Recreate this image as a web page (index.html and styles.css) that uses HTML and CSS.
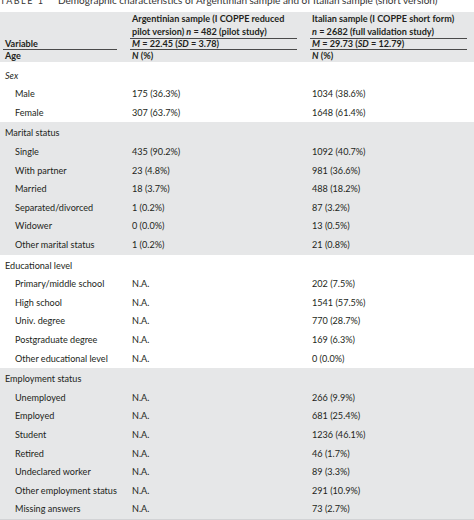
FILE: index.html
```html
<!DOCTYPE html>
<html lang="en">
<head>
    <meta charset="UTF-8">
    <title>Table 1</title>
    <link rel="stylesheet" href="styles.css">
</head>
<body>
    <div class="caption"><span class="label">TABLE 1</span>Demographic characteristics of Argentinian sample and of Italian sample (short version)</div>

    <div class="thead">
        <div class="row head-1">
            <div class="cell"></div>
            <div class="cell ruled">Argentinian sample (I COPPE reduced<br>pilot version) <i>n</i> = 482 (pilot study)</div>
            <div class="cell ruled">Italian sample (I COPPE short form)<br><i>n</i> = 2682 (full validation study)</div>
        </div>
        <div class="row head-2">
            <div class="cell ruled">Variable</div>
            <div class="cell ruled"><i>M</i> = 22.45 (<i>SD</i> = 3.78)</div>
            <div class="cell ruled"><i>M</i> = 29.73 (<i>SD</i> = 12.79)</div>
        </div>
        <div class="row head-3">
            <div class="cell">Age</div>
            <div class="cell"><i>N</i> (%)</div>
            <div class="cell"><i>N</i> (%)</div>
        </div>
    </div>

    <div class="section first">
        <div class="row"><div class="cell group"><i>Sex</i></div><div class="cell"></div><div class="cell"></div></div>
        <div class="row"><div class="cell sub">Male</div><div class="cell">175 (36.3%)</div><div class="cell">1034 (38.6%)</div></div>
        <div class="row"><div class="cell sub">Female</div><div class="cell">307 (63.7%)</div><div class="cell">1648 (61.4%)</div></div>
    </div>

    <div class="section shaded">
        <div class="row"><div class="cell group">Marital status</div><div class="cell"></div><div class="cell"></div></div>
        <div class="row"><div class="cell sub">Single</div><div class="cell">435 (90.2%)</div><div class="cell">1092 (40.7%)</div></div>
        <div class="row"><div class="cell sub">With partner</div><div class="cell">23 (4.8%)</div><div class="cell">981 (36.6%)</div></div>
        <div class="row"><div class="cell sub">Married</div><div class="cell">18 (3.7%)</div><div class="cell">488 (18.2%)</div></div>
        <div class="row"><div class="cell sub">Separated/divorced</div><div class="cell">1 (0.2%)</div><div class="cell">87 (3.2%)</div></div>
        <div class="row"><div class="cell sub">Widower</div><div class="cell">0 (0.0%)</div><div class="cell">13 (0.5%)</div></div>
        <div class="row"><div class="cell sub">Other marital status</div><div class="cell">1 (0.2%)</div><div class="cell">21 (0.8%)</div></div>
    </div>

    <div class="section">
        <div class="row"><div class="cell group">Educational level</div><div class="cell"></div><div class="cell"></div></div>
        <div class="row"><div class="cell sub">Primary/middle school</div><div class="cell">N.A.</div><div class="cell">202 (7.5%)</div></div>
        <div class="row"><div class="cell sub">High school</div><div class="cell">N.A.</div><div class="cell">1541 (57.5%)</div></div>
        <div class="row"><div class="cell sub">Univ. degree</div><div class="cell">N.A.</div><div class="cell">770 (28.7%)</div></div>
        <div class="row"><div class="cell sub">Postgraduate degree</div><div class="cell">N.A.</div><div class="cell">169 (6.3%)</div></div>
        <div class="row"><div class="cell sub">Other educational level</div><div class="cell">N.A.</div><div class="cell">0 (0.0%)</div></div>
    </div>

    <div class="section shaded last">
        <div class="row"><div class="cell group">Employment status</div><div class="cell"></div><div class="cell"></div></div>
        <div class="row"><div class="cell sub">Unemployed</div><div class="cell">N.A.</div><div class="cell">266 (9.9%)</div></div>
        <div class="row"><div class="cell sub">Employed</div><div class="cell">N.A.</div><div class="cell">681 (25.4%)</div></div>
        <div class="row"><div class="cell sub">Student</div><div class="cell">N.A.</div><div class="cell">1236 (46.1%)</div></div>
        <div class="row"><div class="cell sub">Retired</div><div class="cell">N.A.</div><div class="cell">46 (1.7%)</div></div>
        <div class="row"><div class="cell sub">Undeclared worker</div><div class="cell">N.A.</div><div class="cell">89 (3.3%)</div></div>
        <div class="row"><div class="cell sub">Other employment status</div><div class="cell">N.A.</div><div class="cell">291 (10.9%)</div></div>
        <div class="row"><div class="cell sub">Missing answers</div><div class="cell">N.A.</div><div class="cell">73 (2.7%)</div></div>
    </div>
</body>
</html>
```

FILE: styles.css
```css
body {
    margin: 0;
    font-family: Lato, 'Open Sans', Arial, sans-serif;
    font-size: 9.1px;
    color: #231f20;
    background: white;
}
.caption {
    margin-top: -6px;
    height: 18px;
    line-height: 12px;
    white-space: nowrap;
    color: #333;
    font-size: 10px;
}
.caption .label {
    display: inline-block;
    width: 58px;
    letter-spacing: 1.5px;
    font-size: 9px;
}
.row {
    display: grid;
    grid-template-columns: 127px 180px 1fr;
    padding-left: 3px;
}
.cell {
    padding-left: 2px;
    white-space: nowrap;
}
.thead {
    background: #e6e7e8;
    padding-top: 1px;
    font-weight: bold;
    font-size: 9.1px;
}
.thead .ruled {
    border-bottom: 1px solid #4a4a4a;
}
.head-1 { line-height: 12.6px; }
.head-2 { line-height: 10px; }
.head-3 { line-height: 12px; }
.head-1 .cell:nth-child(2),
.head-2 .cell:nth-child(1),
.head-2 .cell:nth-child(2) { margin-right: 13px; }
.head-1 .cell:nth-child(3),
.head-2 .cell:nth-child(3) { margin-right: 7px; }
.section {
    padding-top: 2px;
}
.section.first {
    padding-top: 4.5px;
}
.section .row {
    height: 18.6px;
    line-height: 18.6px;
}
.shaded {
    background: #e6e7e8;
}
.last {
    border-bottom: 1px solid #d2d3d5;
}
.group {
    padding-left: 2px;
}
.sub {
    padding-left: 12px;
}
```
